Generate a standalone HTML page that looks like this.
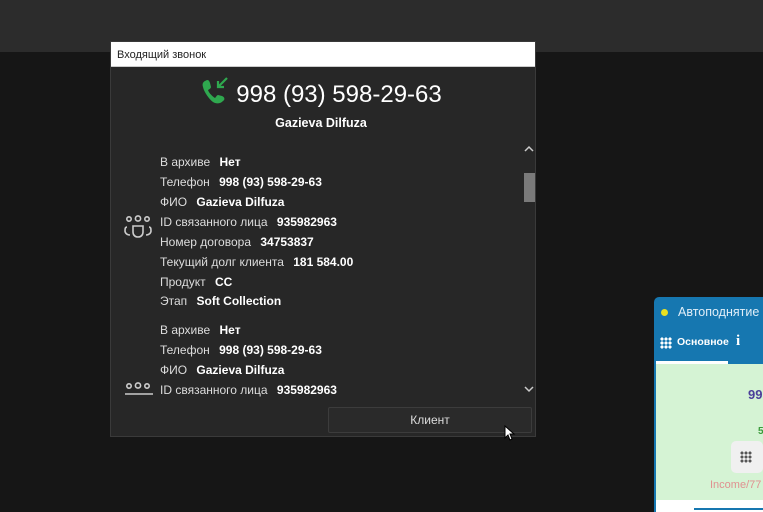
<!DOCTYPE html>
<html><head><meta charset="utf-8"><style>
*{margin:0;padding:0;box-sizing:border-box}
html,body{width:763px;height:512px;overflow:hidden}
body{background:#161616;font-family:"Liberation Sans",sans-serif;position:relative}
.top{position:absolute;left:0;top:0;width:763px;height:52px;background:#2c2c2c}
.dlg{position:absolute;left:110px;top:41px;width:426px;height:396px;background:#272727;border:1px solid #3a3a3a}
.tb{height:25px;background:#fff;color:#222;font-size:11px;padding:7px 0 0 6px;border-bottom:1px solid #ccc}
.ph{position:absolute;top:34px;left:0;width:420px;text-align:center;color:#fff;font-size:24px}
.nm{position:absolute;top:74px;left:0;width:420px;text-align:center;color:#fff;font-size:12.5px;font-weight:bold}
.row{position:absolute;left:49px;color:#ddd;font-size:12px;white-space:nowrap}
.row b{color:#fff;margin-left:6px}
.sb{position:absolute;left:412px;width:12px;height:12px}
.btn{position:absolute;left:217px;top:365px;width:204px;height:26px;border:1px solid #3c3c3c;background:#2a2a2a;color:#ddd;font-size:12px;text-align:center;line-height:24px;border-radius:2px}
.w{position:absolute;left:654px;top:297px;width:120px;height:220px;background:#1677b0;border-radius:5px 0 0 0}
</style></head><body>
<div class="top"></div>
<div class="dlg">
<div class="tb">Входящий звонок</div>
<div class="ph"><svg width="30" height="30" viewBox="0 0 30 30" style="vertical-align:-4px;margin-right:6px"><path d="M5 5c3-2 4-1 5 2l1 4c0 1-1 2-3 3 1 3 4 6 7 8 1-1 2-3 3-3l4 1c3 1 3 4 1 5-3 3-7 3-10 1C9 23 4 16 3 11 2 8 3 6 5 5z" fill="#2fa84f"/><path d="M27 2l-9 9M18 5v6h6" stroke="#2fa84f" stroke-width="2.2" fill="none"/></svg>998 (93) 598-29-63</div>
<div class="nm">Gazieva Dilfuza</div>
<svg class="sb" style="top:101px" viewBox="0 0 12 12"><path d="M2 8l4-4 4 4" stroke="#ccc" stroke-width="1.5" fill="none"/></svg>
<div style="position:absolute;left:413px;top:131px;width:11px;height:29px;background:#7a7a7a"></div>
<svg class="sb" style="top:341px" viewBox="0 0 12 12"><path d="M2 4l4 4 4-4" stroke="#ccc" stroke-width="1.5" fill="none"/></svg>
<svg style="position:absolute;left:13px;top:173px" width="30" height="26" viewBox="0 0 30 26"><g fill="none" stroke="#ccc" stroke-width="1.6"><circle cx="5" cy="4" r="2.2"/><circle cx="14" cy="3.5" r="2.6"/><circle cx="23" cy="4" r="2.2"/><path d="M3 12c-2 0-2 2-2 4s2 4 5 4M25 12c2 0 2 2 2 4s-2 4-5 4M9 11h10v6c0 3-2 5-5 5s-5-2-5-5z"/></g></svg>
<svg style="position:absolute;left:13px;top:340px" width="30" height="14" viewBox="0 0 30 14"><g fill="none" stroke="#ccc" stroke-width="1.6"><circle cx="5" cy="4" r="2.2"/><circle cx="14" cy="3.5" r="2.6"/><circle cx="23" cy="4" r="2.2"/><path d="M1 12h28"/></g></svg>
<div class="row" style="top:113px">В архиве <b>Нет</b></div>
<div class="row" style="top:133px">Телефон <b>998 (93) 598-29-63</b></div>
<div class="row" style="top:153px">ФИО <b>Gazieva Dilfuza</b></div>
<div class="row" style="top:173px">ID связанного лица <b>935982963</b></div>
<div class="row" style="top:193px">Номер договора <b>34753837</b></div>
<div class="row" style="top:213px">Текущий долг клиента <b>181 584.00</b></div>
<div class="row" style="top:233px">Продукт <b>CC</b></div>
<div class="row" style="top:252px">Этап <b>Soft Collection</b></div>
<div class="row" style="top:281px">В архиве <b>Нет</b></div>
<div class="row" style="top:301px">Телефон <b>998 (93) 598-29-63</b></div>
<div class="row" style="top:321px">ФИО <b>Gazieva Dilfuza</b></div>
<div class="row" style="top:341px">ID связанного лица <b>935982963</b></div>
<div class="btn">Клиент</div>
</div>
<svg style="position:absolute;left:504px;top:425px" width="12" height="16" viewBox="0 0 12 16"><path d="M1 1v12l3-3 2 5 2-1-2-5h4z" fill="#fff" stroke="#000" stroke-width="1"/></svg>
<div class="w">
<div style="position:absolute;left:7px;top:12px;width:7px;height:7px;border-radius:50%;background:#e8e020"></div>
<div style="position:absolute;left:24px;top:8px;color:#e0eef8;font-size:12.5px">Автоподнятие</div>
<div style="position:absolute;left:6px;top:40px;width:12px;height:12px;background:radial-gradient(circle,#fff 1.5px,transparent 1.7px) 0 0/4px 4px"></div>
<div style="position:absolute;left:23px;top:39px;color:#fff;font-size:10.5px;font-weight:bold">Основное</div>
<div style="position:absolute;left:82px;top:36px;color:#fff;font-size:15px;font-weight:bold;font-family:'Liberation Serif',serif">i</div>
<div style="position:absolute;left:2px;top:64px;width:72px;height:3px;background:#fff"></div>
<div style="position:absolute;left:2px;top:67px;width:118px;height:136px;background:#d5f3d4"></div>
<div style="position:absolute;left:94px;top:90px;color:#4b3f9a;font-size:13px;font-weight:bold">99</div>
<div style="position:absolute;left:104px;top:129px;color:#3a9a3a;font-size:10px;font-weight:bold">5</div>
<div style="position:absolute;left:77px;top:144px;width:32px;height:32px;border-radius:5px;background:#f0f0f0"></div>
<div style="position:absolute;left:86px;top:154px;width:12px;height:12px;background:radial-gradient(circle,#555 1.4px,transparent 1.6px) 0 0/4px 4px"></div>
<div style="position:absolute;left:56px;top:182px;color:#e09090;font-size:11px">Income/77</div>
<div style="position:absolute;left:2px;top:203px;width:118px;height:20px;background:#fff"></div>
<div style="position:absolute;left:40px;top:211px;width:80px;height:2px;background:#1677b0"></div>
</div>
</body></html>
